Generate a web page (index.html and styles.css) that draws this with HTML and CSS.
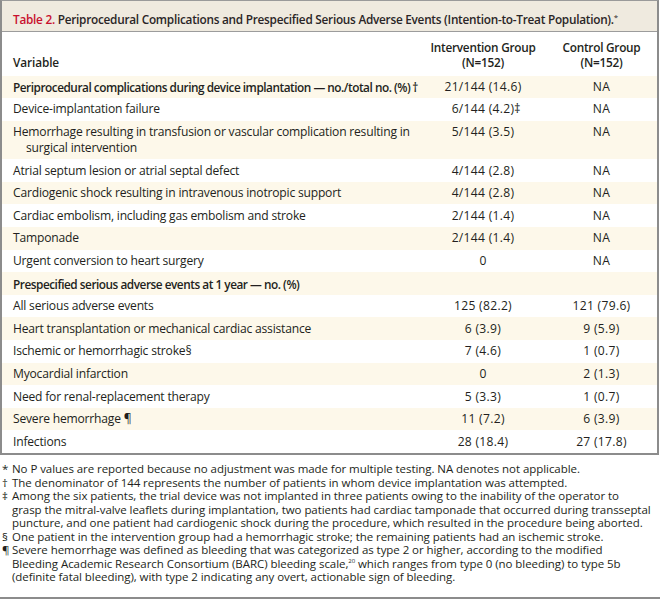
FILE: index.html
```html
<!DOCTYPE html>
<html>
<head>
<meta charset="utf-8">
<link rel="stylesheet" href="styles.css">
</head>
<body>
<div class="page">
  <div class="box">
    <div class="title"><span class="label">Table 2.</span> Periprocedural Complications and Prespecified Serious Adverse Events (Intention-to-Treat Population).<span class="sup">*</span></div>
    <table class="data">
      <thead>
        <tr>
          <th class="var">Variable</th>
          <th class="num c1">Intervention Group<br>(N=152)</th>
          <th class="num c2">Control Group<br>(N=152)</th>
        </tr>
      </thead>
      <tbody>
        <tr class="s"><td class="var b">Periprocedural complications during device implantation — no./total no. (%)<span class="mk">†</span></td><td class="num c1">21/144 (14.6)</td><td class="num c2">NA</td></tr>
        <tr><td class="var">Device-implantation failure</td><td class="num c1">6/144 (4.2)<span class="tail">‡</span></td><td class="num c2">NA</td></tr>
        <tr class="s"><td class="var hang">Hemorrhage resulting in transfusion or vascular complication resulting in<br>surgical intervention</td><td class="num c1">5/144 (3.5)</td><td class="num c2">NA</td></tr>
        <tr><td class="var">Atrial septum lesion or atrial septal defect</td><td class="num c1">4/144 (2.8)</td><td class="num c2">NA</td></tr>
        <tr class="s"><td class="var">Cardiogenic shock resulting in intravenous inotropic support</td><td class="num c1">4/144 (2.8)</td><td class="num c2">NA</td></tr>
        <tr><td class="var">Cardiac embolism, including gas embolism and stroke</td><td class="num c1">2/144 (1.4)</td><td class="num c2">NA</td></tr>
        <tr class="s"><td class="var">Tamponade</td><td class="num c1">2/144 (1.4)</td><td class="num c2">NA</td></tr>
        <tr><td class="var">Urgent conversion to heart surgery</td><td class="num c1">0</td><td class="num c2">NA</td></tr>
        <tr class="s"><td class="var b">Prespecified serious adverse events at 1 year — no. (%)</td><td class="num c1"></td><td class="num c2"></td></tr>
        <tr><td class="var">All serious adverse events</td><td class="num c1">125 (82.2)</td><td class="num c2">121 (79.6)</td></tr>
        <tr class="s"><td class="var">Heart transplantation or mechanical cardiac assistance</td><td class="num c1">6 (3.9)</td><td class="num c2">9 (5.9)</td></tr>
        <tr><td class="var">Ischemic or hemorrhagic stroke§</td><td class="num c1">7 (4.6)</td><td class="num c2">1 (0.7)</td></tr>
        <tr class="s"><td class="var">Myocardial infarction</td><td class="num c1">0</td><td class="num c2">2 (1.3)</td></tr>
        <tr><td class="var">Need for renal-replacement therapy</td><td class="num c1">5 (3.3)</td><td class="num c2">1 (0.7)</td></tr>
        <tr class="s"><td class="var">Severe hemorrhage ¶</td><td class="num c1">11 (7.2)</td><td class="num c2">6 (3.9)</td></tr>
        <tr><td class="var">Infections</td><td class="num c1">28 (18.4)</td><td class="num c2">27 (17.8)</td></tr>
      </tbody>
    </table>
  </div>
  <div class="notes">
    <div class="note"><span class="m">*</span><span class="t">No P values are reported because no adjustment was made for multiple testing. NA denotes not applicable.</span></div>
    <div class="note"><span class="m">†</span><span class="t">The denominator of 144 represents the number of patients in whom device implantation was attempted.</span></div>
    <div class="note"><span class="m">‡</span><span class="t">Among the six patients, the trial device was not implanted in three patients owing to the inability of the operator to<br>grasp the mitral-valve leaflets during implantation, two patients had cardiac tamponade that occurred during transseptal<br>puncture, and one patient had cardiogenic shock during the procedure, which resulted in the procedure being aborted.</span></div>
    <div class="note"><span class="m">§</span><span class="t">One patient in the intervention group had a hemorrhagic stroke; the remaining patients had an ischemic stroke.</span></div>
    <div class="note"><span class="m">¶</span><span class="t">Severe hemorrhage was defined as bleeding that was categorized as type 2 or higher, according to the modified<br>Bleeding Academic Research Consortium (BARC) bleeding scale,<sup class="ref">20</sup> which ranges from type 0 (no bleeding) to type 5b<br>(definite fatal bleeding), with type 2 indicating any overt, actionable sign of bleeding.</span></div>
  </div>
</div>
</body>
</html>
```
FILE: styles.css
```css
* { box-sizing: border-box; }
html, body { margin: 0; padding: 0; background: #fff; }
body { font-family: "Open Sans", "Noto Sans", sans-serif; color: #231f20; }
.page { width: 660px; height: 604px; }
.box {
  width: 659px;
  border: 2px solid #8c8c8c;
  border-top: 1px solid #9a9a9a;
  border-bottom: 2px solid #8c8c8c;
}
.title {
  height: 31px;
  background: #efeadf;
  border-bottom: 1px solid #9c9c9c;
  padding: 9px 0 0 11px;
  font-size: 11.8px;
  font-weight: 600;
  letter-spacing: -0.26px;
  line-height: 14px;
  color: #2a2526;
  white-space: nowrap;
}
.title .label { color: #c8102e; }
.title .sup { font-size: 8px; vertical-align: 4px; font-weight: 400; }
.data { width: 100%; border-collapse: collapse; table-layout: fixed; font-size: 12.1px; letter-spacing: -0.2px; }
.data th { font-weight: 600; line-height: 15px; vertical-align: bottom; padding: 8px 0 5.5px; font-size: 11.8px; }
.data th.num { letter-spacing: -0.25px; }
.data th.var { text-align: left; padding-left: 11px; letter-spacing: -0.1px; }
.data td { line-height: 16px; padding: 3.3px 0; vertical-align: top; }
.data .var { padding-left: 11px; padding-right: 0; white-space: nowrap; }
.data .b { font-weight: 600; letter-spacing: -0.47px; font-size: 11.8px; }
.data .hang { padding-left: 24px; text-indent: -13px; }
.data tr.s td { background: #fdf8ea; }
.data .num { text-align: center; white-space: nowrap; }
.data td.num { letter-spacing: 0.3px; }
.data .c1 { width: 126px; }
.data .c2 { width: 111px; }
.mk { margin-left: 2px; }
.tail { display: inline-block; width: 0; overflow: visible; }
.notes {
  width: 660px;
  height: 144px;
  padding: 7px 0 0 2px;
  border-bottom: 2px solid #8c8c8c;
  font-size: 11.5px;
  line-height: 13.5px;
  letter-spacing: -0.06px;
  color: #231f20;
  white-space: nowrap;
}
.note { display: flex; }
.note .m { flex: 0 0 10px; }
.note .t { flex: 1; }
.ref { font-size: 6px; vertical-align: super; line-height: 1; }
```
